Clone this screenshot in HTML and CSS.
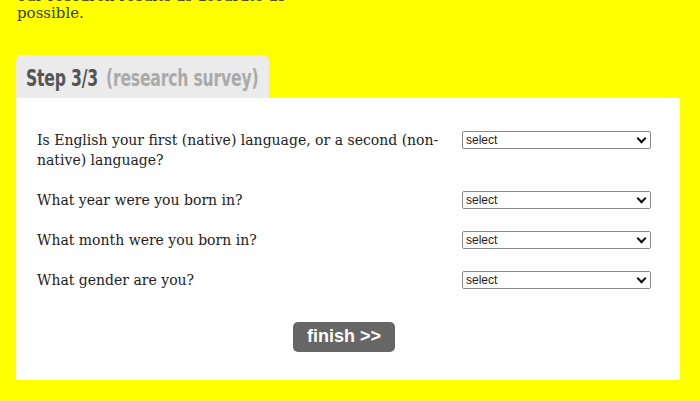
FILE: index.html
```html
<!DOCTYPE html>
<html lang="en">
<head>
<meta charset="utf-8">
<title>Step 3/3</title>
<link rel="stylesheet" href="styles.css">
</head>
<body>
<div class="page">
  <p class="intro">our research results as accurate as<br>possible.</p>
  <div class="tab"><span class="tabtext"><span class="step">Step 3/3</span><span class="sub">(research survey)</span></span></div>
  <form class="panel">
    <div class="rows">
      <div class="row">
        <label class="q">Is English your first (native) language, or a second (non-native) language?</label>
        <span class="selwrap"><select class="sel"><option>select</option></select></span>
      </div>
      <div class="row">
        <label class="q">What year were you born in?</label>
        <span class="selwrap"><select class="sel"><option>select</option></select></span>
      </div>
      <div class="row">
        <label class="q">What month were you born in?</label>
        <span class="selwrap"><select class="sel"><option>select</option></select></span>
      </div>
      <div class="row">
        <label class="q">What gender are you?</label>
        <span class="selwrap"><select class="sel"><option>select</option></select></span>
      </div>
    </div>
    <div class="actions"><button type="button" class="finish">finish &gt;&gt;</button></div>
  </form>
</div>
</body>
</html>
```
FILE: styles.css
```css
html, body {
  margin: 0;
  padding: 0;
  background: #ffff00;
}
body {
  font-family: "DejaVu Serif", "Liberation Serif", serif;
  color: #222;
}
.page {
  width: 664px;
  padding: 0 0 0 16px;
}
.intro {
  margin: -12px 0 0 1px;
  font-size: 15px;
  line-height: 17px;
  color: #3a3a20;
}
.tab {
  margin-top: 33px;
  width: 253px;
  height: 43px;
  box-sizing: border-box;
  background: #ebebeb;
  border-radius: 6px 6px 0 0;
  display: flex;
  align-items: center;
  padding: 2px 0 0 10px;
  white-space: nowrap;
}
.tabtext {
  display: inline-block;
  transform: scaleX(0.68);
  transform-origin: left center;
  font-family: "DejaVu Sans", sans-serif;
  font-weight: bold;
  font-size: 23px;
  letter-spacing: -0.3px;
}
.step { color: #555; margin-right: 12px; }
.sub { color: #aaa; }
.panel {
  margin: 0;
  background: #fff;
  height: 282px;
  box-sizing: border-box;
  padding: 32px 29px 0 21px;
}
.rows {
  display: flex;
  flex-direction: column;
  gap: 20px;
}
.row {
  display: flex;
  justify-content: space-between;
  align-items: flex-start;
}
.q {
  width: 412px;
  font-size: 14px;
  line-height: 20px;
  color: #222;
}
.selwrap {
  position: relative;
  display: block;
  width: 189px;
  height: 18px;
  margin-top: 1px;
}
.selwrap::after {
  content: "";
  position: absolute;
  right: 6px;
  top: 4px;
  width: 5px;
  height: 5px;
  border-right: 2px solid #111;
  border-bottom: 2px solid #111;
  transform: rotate(45deg);
  pointer-events: none;
}
.sel {
  appearance: none;
  -webkit-appearance: none;
  display: block;
  width: 189px;
  height: 18px;
  box-sizing: border-box;
  font-family: "Liberation Sans", Arial, sans-serif;
  font-size: 12px;
  line-height: 16px;
  color: #222;
  border: 1px solid #8a8a8a;
  border-radius: 2px;
  background: #fff;
  padding: 0 0 0 3px;
  margin: 0;
}
.actions {
  display: flex;
  justify-content: center;
  margin-top: 32px;
}
.finish {
  width: 102px;
  height: 30px;
  background: #666;
  color: #fff;
  border: none;
  border-radius: 5px;
  font-family: "Liberation Sans", Arial, sans-serif;
  font-weight: bold;
  font-size: 18px;
  padding: 0 0 2px;
}
```
